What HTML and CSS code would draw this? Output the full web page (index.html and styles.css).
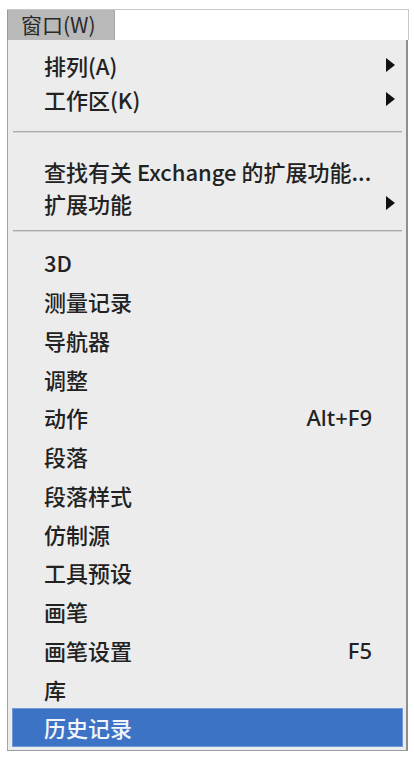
FILE: index.html
```html
<!DOCTYPE html>
<html lang="zh-CN">
<head>
  <meta charset="UTF-8">
  <meta name="viewport" content="width=device-width, initial-scale=1.0">
  <title>窗口菜单</title>
  <link rel="stylesheet" href="styles.css">
</head>
<body>
  <div class="window-menu">
    <div class="menubar">
      <div class="menu-title">窗口(W)</div>
    </div>
    <div class="menu-body">
      <div class="group top">
        <div class="item"><span>排列(A)</span><span class="arrow"></span></div>
        <div class="item"><span>工作区(K)</span><span class="arrow"></span></div>
      </div>
      <div class="sep sep-a"></div>
      <div class="group mid">
        <div class="item"><span>查找有关 Exchange 的扩展功能...</span></div>
        <div class="item"><span>扩展功能</span><span class="arrow"></span></div>
      </div>
      <div class="sep sep-b"></div>
      <div class="group panels">
        <div class="item"><span>3D</span></div>
        <div class="item"><span>测量记录</span></div>
        <div class="item"><span>导航器</span></div>
        <div class="item"><span>调整</span></div>
        <div class="item"><span>动作</span><span class="key">Alt+F9</span></div>
        <div class="item"><span>段落</span></div>
        <div class="item"><span>段落样式</span></div>
        <div class="item"><span>仿制源</span></div>
        <div class="item"><span>工具预设</span></div>
        <div class="item"><span>画笔</span></div>
        <div class="item"><span>画笔设置</span><span class="key">F5</span></div>
        <div class="item"><span>库</span></div>
        <div class="item active"><span>历史记录</span></div>
      </div>
    </div>
  </div>
</body>
</html>
```

FILE: styles.css
```css
body {
  margin: 0;
  background: #fff;
  font-family: "Noto Sans CJK SC", "Noto Sans", sans-serif;
  color: #222;
}
.window-menu {
  padding: 9px 5px 0 7px;
}
.menubar {
  display: flex;
  height: 31px;
  background: #fff;
  border-top: 1px solid #c8c8c8;
  border-right: 1px solid #c8c8c8;
  box-sizing: border-box;
}
.menu-title {
  width: 108px;
  background: #b9b9b9;
  border-left: 1px solid #9a9a9a;
  border-right: 1px solid #a8a8a8;
  box-sizing: border-box;
  font-size: 21px;
  line-height: 29px;
  padding-left: 13px;
  color: #2a2a2a;
}
.menu-body {
  width: 401px;
  box-sizing: border-box;
  background: #ececec;
  border-left: 1px solid #a4a4a4;
  border-right: 2px solid #8e8e8e;
  border-bottom: 1px solid #9a9a9a;
  padding: 8px 3px 3px 4px;
}
.item {
  display: flex;
  align-items: center;
  justify-content: space-between;
  padding: 0 8px 0 32px;
  font-size: 22px;
  font-weight: 500;
}
.top .item {
  height: 34px;
}
.mid .item {
  height: 32px;
}
.panels .item {
  height: 38.75px;
}
.key {
  font-family: "Noto Sans", sans-serif;
  font-size: 22px;
  margin-right: 23px;
}
.arrow {
  width: 0;
  height: 0;
  border-top: 7px solid transparent;
  border-bottom: 7px solid transparent;
  border-left: 9px solid #111;
}
.sep {
  height: 1px;
  background: #a9a9a9;
  border-bottom: 1px solid #d4d4d4;
  margin: 0 1px 0 1px;
}
.sep-a {
  margin-top: 15px;
  margin-bottom: 22px;
}
.sep-b {
  margin-top: 11px;
  margin-bottom: 11px;
}
.item.active {
  background: #3c73c4;
  color: #f2f6fc;
  box-shadow: inset 0 0 0 1px #6e98d6;
}
```
